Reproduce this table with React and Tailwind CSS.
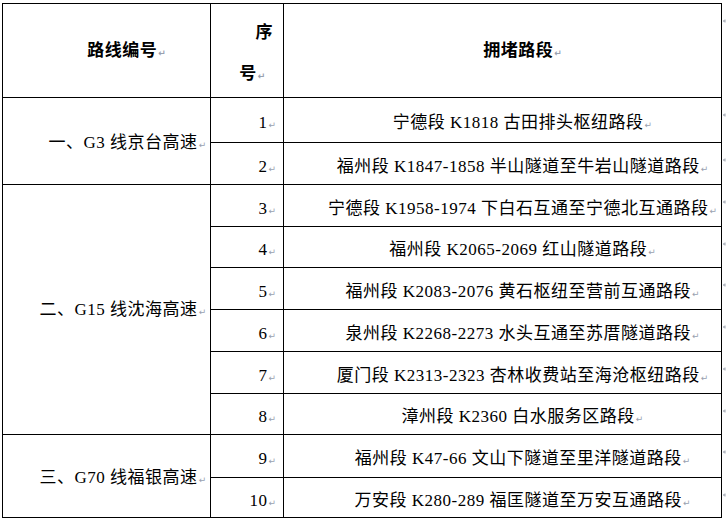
import React from 'react';

// 段落标记
const Mark = () => (
  <span className="font-['DejaVu_Sans',sans-serif] text-[9px] text-gray-400 tracking-normal ml-px">↵</span>
);

const groups = [
  {
    name: '一、G3 线京台高速',
    cellPad: 'pt-[33px]',
    items: [
      [1, '宁德段 K1818 古田排头枢纽路段', 'h-[45px]'],
      [2, '福州段 K1847-1858 半山隧道至牛岩山隧道路段', 'h-[42px]'],
    ],
  },
  {
    name: '二、G15 线沈海高速',
    cellPad: 'pt-[113px]',
    items: [
      [3, '宁德段 K1958-1974 下白石互通至宁德北互通路段', 'h-[42px]'],
      [4, '福州段 K2065-2069 红山隧道路段', 'h-[41px]'],
      [5, '福州段 K2083-2076 黄石枢纽至营前互通路段', 'h-[42px]'],
      [6, '泉州段 K2268-2273 水头互通至苏厝隧道路段', 'h-[42px]'],
      [7, '厦门段 K2313-2323 杏林收费站至海沧枢纽路段', 'h-[42px]'],
      [8, '漳州段 K2360 白水服务区路段', 'h-[41px]'],
    ],
  },
  {
    name: '三、G70 线福银高速',
    cellPad: 'pt-[31px]',
    items: [
      [9, '福州段 K47-66 文山下隧道至里洋隧道路段', 'h-[43px]'],
      [10, '万安段 K280-289 福匡隧道至万安互通路段', 'h-[40px]'],
    ],
  },
];

// 行尾标记（被窗口切掉一半）
const RowEnd = () => (
  <td className="border-0 p-0 align-top">
    <div className="w-[4px] overflow-hidden pt-[13px]">
      <svg width="8" height="7" viewBox="0 0 8 7" className="block">
        <path d="M7 0v4H1.5M3 2.5L1.5 4 3 5.5" fill="none" stroke="#9ca3af" strokeWidth="1" />
      </svg>
    </div>
  </td>
);

export default function App() {
  return (
    <div className="w-[726px] h-[521px] bg-white overflow-hidden pl-[2px] pt-[3px] font-['Liberation_Serif','Noto_Sans_CJK_SC',serif] text-[17px] tracking-[0.5px] text-black">
      <table className="table-fixed border-collapse">
        <colgroup>
          <col className="w-[209px]" />
          <col className="w-[73px]" />
          <col className="w-[438px]" />
          <col className="w-[4px]" />
        </colgroup>
        <tbody>
          {/* 表头 */}
          <tr className="h-[94px]">
            <td className="border border-black p-0 align-middle text-center font-bold pl-[40px]">
              路线编号<Mark />
            </td>
            <td className="border border-black p-0 align-top font-bold">
              <div className="pt-[7px] pr-[10px] text-right leading-[44px]">序</div>
              <div className="pl-[28px] leading-[38px]">
                号<Mark />
              </div>
            </td>
            <td className="border border-black p-0 align-middle text-center font-bold pl-[40px]">
              拥堵路段<Mark />
            </td>
            <RowEnd />
          </tr>

          {groups.map(g =>
            g.items.map(([no, road, h], i) => (
              <tr key={no} className={h}>
                {i === 0 && (
                  <td
                    rowSpan={g.items.length}
                    className={`border border-black p-0 align-top text-right pr-[4px] leading-[24px] ${g.cellPad}`}
                  >
                    {g.name}
                    <Mark />
                  </td>
                )}
                <td className="border border-black p-0 pt-[6px] align-middle text-right pr-[7px]">
                  {no}
                  <Mark />
                </td>
                <td className="border border-black p-0 pt-[6px] align-middle text-center pl-[40px] whitespace-nowrap">
                  {road}
                  <Mark />
                </td>
                <RowEnd />
              </tr>
            ))
          )}
        </tbody>
      </table>
    </div>
  );
}
